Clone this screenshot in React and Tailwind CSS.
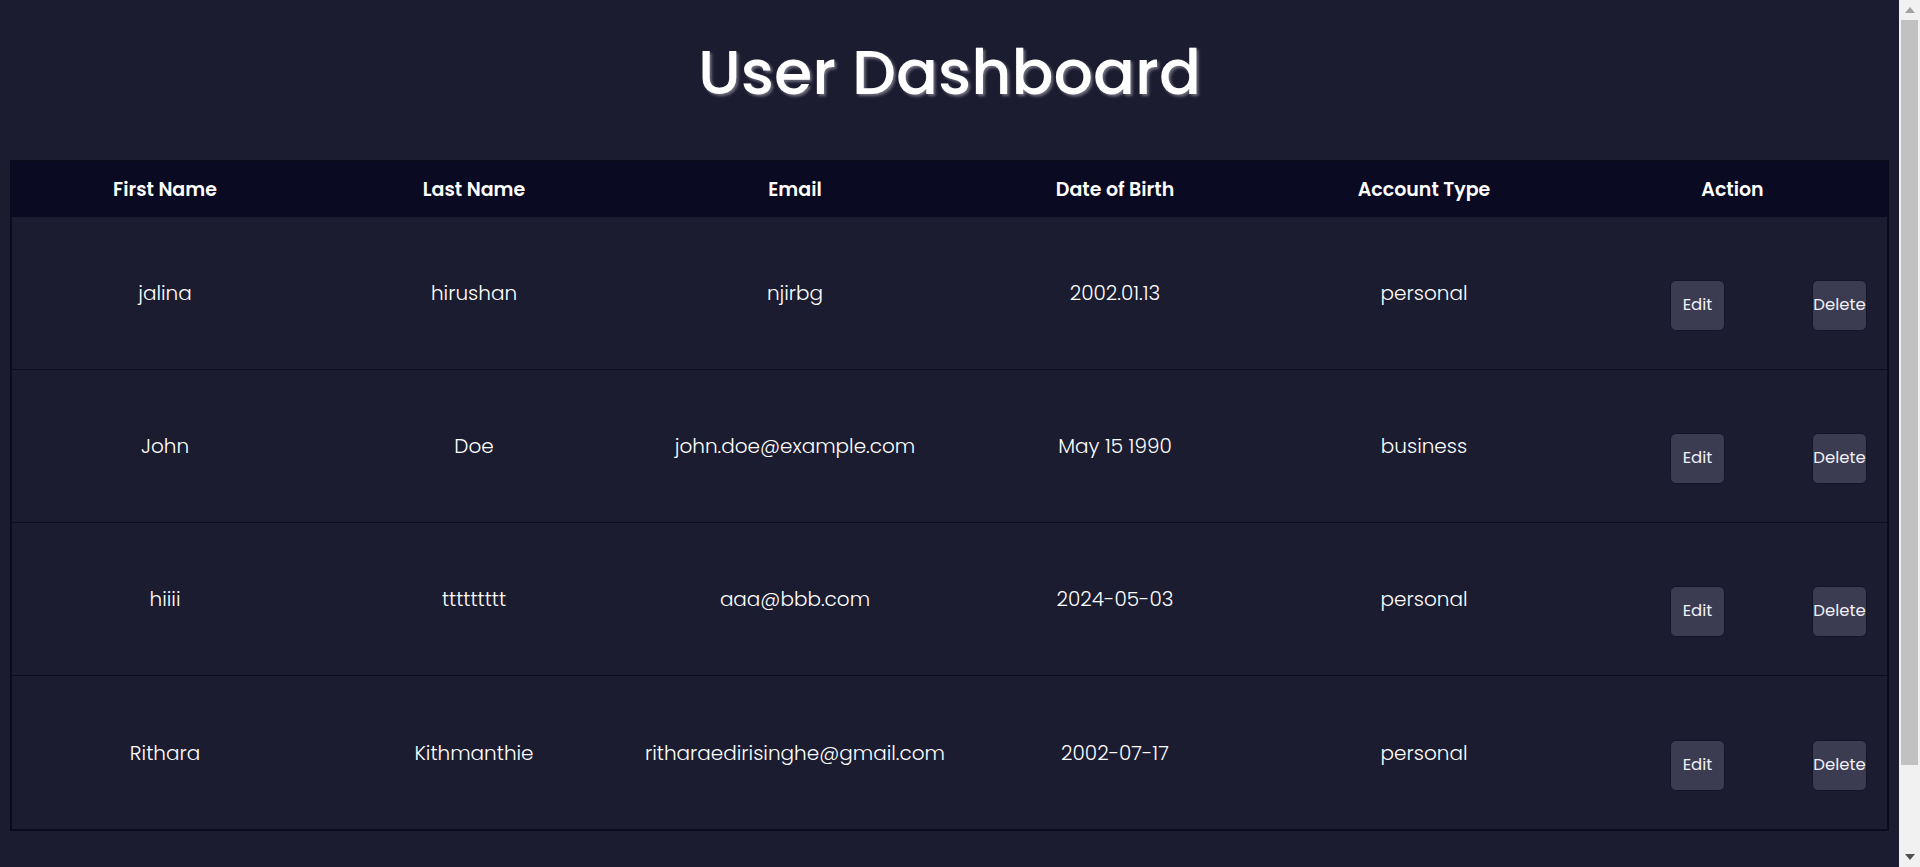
import React from 'react'

const users = [
  { first: 'jalina', last: 'hirushan', email: 'njirbg', dob: '2002.01.13', type: 'personal' },
  { first: 'John', last: 'Doe', email: 'john.doe@example.com', dob: 'May 15 1990', type: 'business' },
  { first: 'hiiii', last: 'ttttttttt', email: 'aaa@bbb.com', dob: '2024-05-03', type: 'personal' },
  { first: 'Rithara', last: 'Kithmanthie', email: 'ritharaedirisinghe@gmail.com', dob: '2002-07-17', type: 'personal' },
]

const cols = 'grid grid-cols-[306px_312px_330px_310px_308px_1fr]'

function Scrollbar() {
  return (
    <div className="w-[21px] shrink-0 bg-[#f1f1f1] flex flex-col items-center">
      <div className="h-[20px] flex items-center justify-center">
        <svg width="10" height="6" viewBox="0 0 10 6"><path d="M5 0 L10 6 L0 6 Z" fill="#a3a3a3" /></svg>
      </div>
      <div className="w-[17px] h-[745px] bg-[#c1c1c1]" />
      <div className="flex-1" />
      <div className="h-[20px] flex items-center justify-center">
        <svg width="10" height="6" viewBox="0 0 10 6"><path d="M0 0 L10 0 L5 6 Z" fill="#505050" /></svg>
      </div>
    </div>
  )
}

export default function App() {
  return (
    <div className="flex h-[867px] overflow-hidden bg-[#1c1c30] text-white font-['Poppins','Inter',sans-serif]">
      <div className="flex-1 px-[10px]">
        <div className="pt-[42px] h-[160px]">
          <h1 className="text-center text-[62px] leading-none font-medium [text-shadow:2px_2px_3px_#70707f]">
            User Dashboard
          </h1>
        </div>

        {/* Table */}
        <div className="border-2 border-[#0b0b1e]">
          <div className={`${cols} h-[55px] pt-[2px] bg-[#0a0a22] items-center text-[19px] font-semibold text-center`}>
            <div>First Name</div>
            <div>Last Name</div>
            <div>Email</div>
            <div>Date of Birth</div>
            <div>Account Type</div>
            <div>Action</div>
          </div>
          {users.map((u, i) => (
            <div
              key={i}
              className={`${cols} h-[153px] items-center text-center text-[20px] font-light ${i < users.length - 1 ? 'border-b border-[#0e0e22]' : ''}`}
            >
              <div>{u.first}</div>
              <div>{u.last}</div>
              <div>{u.email}</div>
              <div>{u.dob}</div>
              <div>{u.type}</div>
              <div className="flex justify-end gap-[87px] pr-[20px] mt-[25px]">
                <button className="w-[55px] h-[51px] rounded-[6px] bg-[#3b3b52] border border-[#15152a] text-[16.5px] font-normal text-[#f0f0f5]">
                  Edit
                </button>
                <button className="w-[55px] h-[51px] rounded-[6px] bg-[#3b3b52] border border-[#15152a] text-[16.5px] font-normal text-[#f0f0f5] whitespace-nowrap flex items-center justify-center">
                  Delete
                </button>
              </div>
            </div>
          ))}
        </div>
      </div>
      <Scrollbar />
    </div>
  )
}
